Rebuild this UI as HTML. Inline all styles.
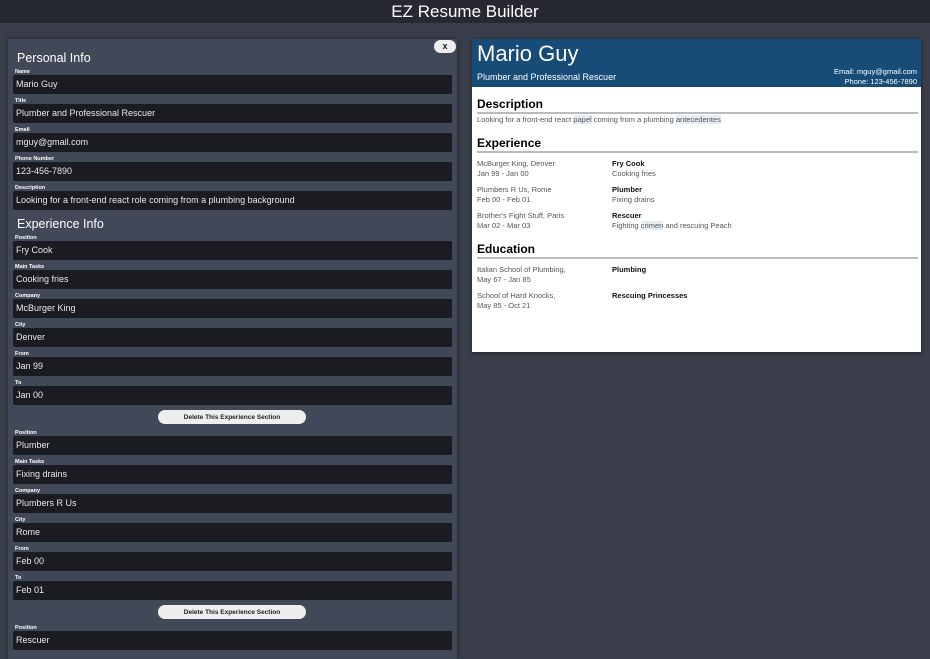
<!DOCTYPE html>
<html><head><style>
*{box-sizing:border-box;margin:0;padding:0}
body{width:930px;height:650px;overflow:hidden;background:#3a3e4a;font-family:"Liberation Sans",sans-serif;position:relative}
.top{position:absolute;left:0;top:0;width:930px;height:23px;background:#262931;color:#fff;text-align:center;font-size:17px;line-height:23px}
.panel{position:absolute;left:8px;top:39px;width:449px;height:620px;background:#414857;box-shadow:0 0 4px rgba(0,0,0,.5)}
.x{position:absolute;left:426px;top:1px;width:22px;height:13px;background:#eee;border-radius:7px;font-size:9px;font-weight:bold;text-align:center;line-height:13px;color:#222}
.h{position:absolute;left:9px;color:#fff;font-size:12.5px}
.lab{position:absolute;left:7px;color:#fff;font-size:5.5px;font-weight:bold}
.in{position:absolute;left:5px;width:439px;height:19px;background:#1b1c21;border-radius:2px;color:#e8e8e8;font-size:9px;line-height:19px;padding-left:3px}
.btn{position:absolute;left:150px;width:148px;height:14px;background:#eee;border-radius:7px;font-size:6.5px;font-weight:bold;color:#222;display:flex;align-items:center;justify-content:center}
.res{position:absolute;left:472px;top:39px;width:449px;height:313px;background:#fff;box-shadow:0 1px 4px rgba(0,0,0,.5)}
.rh{height:48px;background:#174b78;color:#fff;position:relative}
.rh .n{position:absolute;left:5px;top:2px;font-size:22px}
.rh .t{position:absolute;left:5px;top:33px;font-size:9px}
.rh .c{position:absolute;right:4px;top:28px;font-size:7.5px;text-align:right;line-height:10px}
.sec{position:absolute;left:5px;width:441px;font-size:12px;font-weight:bold;color:#000;border-bottom:2px solid #bbb;padding-bottom:1px}
.g{position:absolute;font-size:7.5px;color:#555;line-height:10px}
.b{position:absolute;font-size:7.5px;color:#555;line-height:10px}
.b b{color:#111}
.hl{background:#e6eef4}
</style></head><body>
<div class="top">EZ Resume Builder</div>
<div class="panel">
<div class="x">x</div>
<div class="h" style="top:12px">Personal Info</div>
<div class="lab" style="top:30px">Name</div><div class="in" style="top:36px">Mario Guy</div>
<div class="lab" style="top:59px">Title</div><div class="in" style="top:65px">Plumber and Professional Rescuer</div>
<div class="lab" style="top:88px">Email</div><div class="in" style="top:94px">mguy@gmail.com</div>
<div class="lab" style="top:117px">Phone Number</div><div class="in" style="top:123px">123-456-7890</div>
<div class="lab" style="top:146px">Description</div><div class="in" style="top:152px">Looking for a front-end react role coming from a plumbing background</div>
<div class="h" style="top:178px">Experience Info</div>
<div class="lab" style="top:196px">Position</div><div class="in" style="top:202px">Fry Cook</div>
<div class="lab" style="top:225px">Main Tasks</div><div class="in" style="top:231px">Cooking fries</div>
<div class="lab" style="top:254px">Company</div><div class="in" style="top:260px">McBurger King</div>
<div class="lab" style="top:283px">City</div><div class="in" style="top:289px">Denver</div>
<div class="lab" style="top:312px">From</div><div class="in" style="top:318px">Jan 99</div>
<div class="lab" style="top:341px">To</div><div class="in" style="top:347px">Jan 00</div>
<div class="btn" style="top:371px">Delete This Experience Section</div>
<div class="lab" style="top:391px">Position</div><div class="in" style="top:397px">Plumber</div>
<div class="lab" style="top:420px">Main Tasks</div><div class="in" style="top:426px">Fixing drains</div>
<div class="lab" style="top:449px">Company</div><div class="in" style="top:455px">Plumbers R Us</div>
<div class="lab" style="top:478px">City</div><div class="in" style="top:484px">Rome</div>
<div class="lab" style="top:507px">From</div><div class="in" style="top:513px">Feb 00</div>
<div class="lab" style="top:536px">To</div><div class="in" style="top:542px">Feb 01</div>
<div class="btn" style="top:566px">Delete This Experience Section</div>
<div class="lab" style="top:586px">Position</div><div class="in" style="top:592px">Rescuer</div>
</div>
<div class="res">
<div class="rh"><div class="n">Mario Guy</div><div class="t">Plumber and Professional Rescuer</div><div class="c">Email: mguy@gmail.com<br>Phone: 123-456-7890</div></div>
<div class="sec" style="top:58px">Description</div>
<div class="g" style="left:5px;top:76px">Looking for a front-end react <span class="hl">papel</span> coming from a plumbing <span class="hl">antecedentes</span></div>
<div class="sec" style="top:97px">Experience</div>
<div class="g" style="left:5px;top:120px">McBurger King, Denver<br>Jan 99 - Jan 00</div>
<div class="b" style="left:140px;top:120px"><b>Fry Cook</b><br>Cooking fries</div>
<div class="g" style="left:5px;top:146px">Plumbers R Us, Rome<br>Feb 00 - Feb 01</div>
<div class="b" style="left:140px;top:146px"><b>Plumber</b><br>Fixing drains</div>
<div class="g" style="left:5px;top:172px">Brother's Fight Stuff, Paris<br>Mar 02 - Mar 03</div>
<div class="b" style="left:140px;top:172px"><b>Rescuer</b><br>Fighting <span class="hl">crimen</span> and rescuing Peach</div>
<div class="sec" style="top:203px">Education</div>
<div class="g" style="left:5px;top:226px">Italian School of Plumbing,<br>May 67 - Jan 85</div>
<div class="b" style="left:140px;top:226px"><b>Plumbing</b></div>
<div class="g" style="left:5px;top:252px">School of Hard Knocks,<br>May 85 - Oct 21</div>
<div class="b" style="left:140px;top:252px"><b>Rescuing Princesses</b></div>
</div>
</body></html>
